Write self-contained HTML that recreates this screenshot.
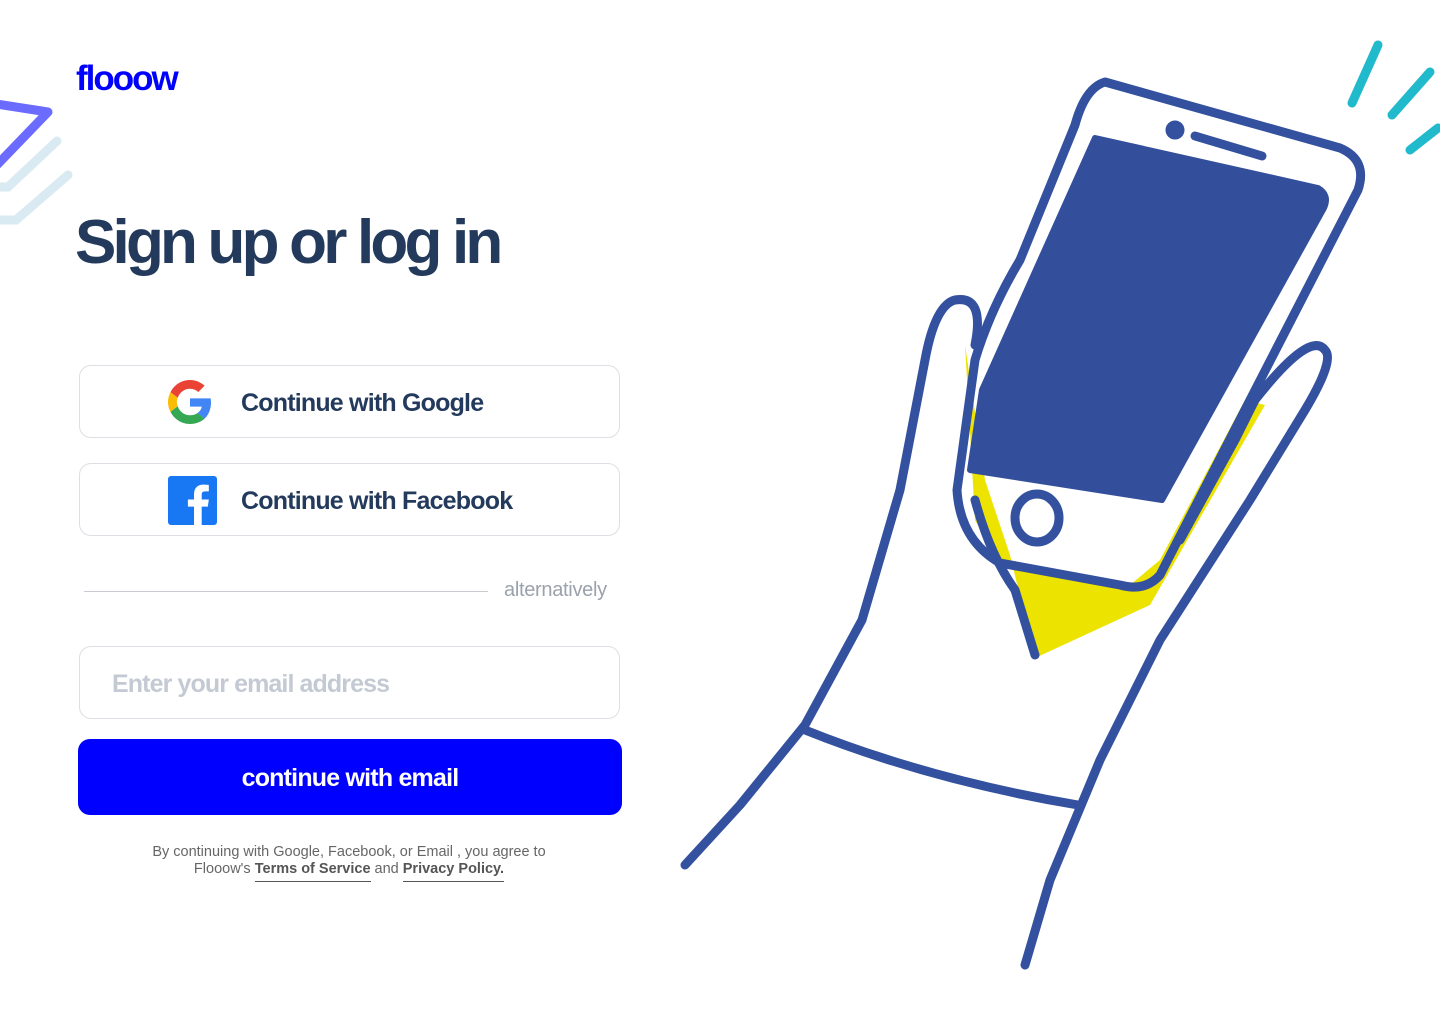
<!DOCTYPE html>
<html><head><meta charset="utf-8"><style>
body{margin:0;width:1440px;height:1024px;background:#fff;position:relative;overflow:hidden;font-family:"Liberation Sans",Arial,sans-serif}
.logo{position:absolute;left:76px;top:59px;font-size:35px;font-weight:bold;color:#0000ff;letter-spacing:-2px}
h1{position:absolute;left:75px;top:207px;margin:0;font-size:62px;font-weight:bold;color:#233a5c;letter-spacing:-3.8px}
.btn{position:absolute;left:79px;width:541px;height:73px;border:1.5px solid #dcdfe3;border-radius:12px;box-sizing:border-box}
.btn span{position:absolute;left:161px;top:23px;font-size:25px;font-weight:bold;color:#233a5c;letter-spacing:-0.8px}
.line{position:absolute;left:84px;top:591px;width:404px;height:1px;background:#c8ccd2}
.alt{position:absolute;left:504px;top:579px;font-size:20px;color:#9aa2ad;letter-spacing:-0.3px}
.email{position:absolute;left:79px;top:646px;width:541px;height:73px;border:1.5px solid #dcdfe3;border-radius:12px;box-sizing:border-box}
.email span{position:absolute;left:32px;top:23px;font-size:25px;color:#c4cad3;font-weight:bold;letter-spacing:-0.9px}
.cta{position:absolute;left:78px;top:739px;width:544px;height:76px;background:#0000ff;border-radius:12px;color:#fff;font-size:25px;font-weight:bold;text-align:center;line-height:78px;letter-spacing:-0.8px}
.terms{position:absolute;left:110px;top:844px;width:478px;text-align:center;font-size:14.5px;color:#666;line-height:17px}
.terms b{color:#555;border-bottom:1px solid #555;padding-bottom:4px}
</style></head><body>
<svg style="position:absolute;left:0;top:95px" width="80" height="140">
<path d="M-10 8 L48 17 L-5 72" stroke="#6b6bff" stroke-width="9" fill="none" stroke-linejoin="round" stroke-linecap="round"/>
<path d="M57 46 L8 92 L-20 92" stroke="#d9eaf2" stroke-width="9" fill="none" stroke-linecap="round"/>
<path d="M68 80 L16 125 L-20 125" stroke="#d9eaf2" stroke-width="9" fill="none" stroke-linecap="round"/>
</svg>
<div class="logo">flooow</div>
<h1>Sign up or log in</h1>
<div class="btn" style="top:365px">
<svg style="position:absolute;left:88px;top:14px" width="44" height="44" viewBox="0 0 48 48"><path fill="#EA4335" d="M24 9.5c3.5 0 6.6 1.2 9.1 3.6l6.8-6.8C35.8 2.4 30.3 0 24 0 14.6 0 6.6 5.4 2.7 13.3l7.9 6.1C12.5 13.7 17.8 9.5 24 9.5z"/><path fill="#4285F4" d="M46.9 24.5c0-1.6-.1-3.1-.4-4.5H24v9h12.9c-.6 3-2.3 5.5-4.8 7.2l7.7 6c4.5-4.2 7.1-10.3 7.1-17.7z"/><path fill="#FBBC05" d="M10.5 28.6c-.5-1.5-.8-3-.8-4.6s.3-3.1.8-4.6l-7.9-6.1C1 16.6 0 20.2 0 24s.9 7.4 2.6 10.7l7.9-6.1z"/><path fill="#34A853" d="M24 48c6.5 0 11.9-2.1 15.9-5.8l-7.7-6c-2.2 1.5-5 2.3-8.2 2.3-6.2 0-11.5-4.2-13.4-9.9l-7.9 6.1C6.6 42.6 14.6 48 24 48z"/></svg>
<span>Continue with Google</span></div>
<div class="btn" style="top:463px">
<svg style="position:absolute;left:88px;top:12px" width="49" height="49" viewBox="0 0 48 48"><rect width="48" height="48" rx="3" fill="#1877f2"/><path fill="#fff" d="M33 48V30h6l1-7h-7v-4.5c0-2 .6-3.4 3.5-3.4H40V8.8c-.7-.1-2.9-.3-5.5-.3-5.4 0-9 3.3-9 9.3V23h-6v7h6v18z"/></svg>
<span>Continue with Facebook</span></div>
<div class="line"></div><div class="alt">alternatively</div>
<div class="email"><span>Enter your email address</span></div>
<div class="cta">continue with email</div>
<div class="terms">By continuing with Google, Facebook, or Email , you agree to<br>Flooow's <b>Terms of Service</b> and <b>Privacy Policy.</b></div>
<svg style="position:absolute;left:0;top:0" width="1440" height="1024">
<g fill="none" stroke-linecap="round" stroke-linejoin="round">
<path d="M965 345 L985 480 L1010 555 L1035 658 L1150 605 L1265 405 L1245 400 L1160 560 L1130 585 L1000 565 L975 520 Z" fill="#ede300" stroke="none"/>
<path d="M1095 138 L1318 188 Q1330 195 1324 208 L1162 500 L970 470 L982 390 Z" fill="#334f9c" stroke="#334f9c" stroke-width="6"/>
<g stroke="#21b9cc" stroke-width="9">
<path d="M1378 45 L1352 103"/><path d="M1430 72 L1392 115"/><path d="M1438 128 L1410 150"/>
</g>
<g stroke="#33519e" stroke-width="9">
<path d="M1105 82 L1340 148 Q1368 160 1358 190 L1160 575 Q1145 592 1120 585 L1000 563 Q960 540 957 490 L975 360 Q990 310 1020 260 L1075 125 Q1085 88 1105 82 Z"/>
<path d="M1195 136 L1262 156"/><circle cx="1175" cy="130" r="5" fill="#33519e"/>
<ellipse cx="1037" cy="518" rx="22" ry="24"/>
<path d="M975 345 Q985 295 955 300 Q935 305 925 360 L900 490 L862 620 L805 725 L740 805 L685 865"/>
<path d="M975 500 Q990 555 1015 590 L1035 655"/>
<path d="M1255 400 Q1310 330 1325 350 Q1335 360 1305 410 L1250 500 L1160 640 L1100 760 L1050 880 L1025 965"/>
<path d="M1255 400 L1235 440 L1180 540"/>
<path d="M805 730 Q930 780 1078 805"/>
</g></g></svg>
</body></html>
